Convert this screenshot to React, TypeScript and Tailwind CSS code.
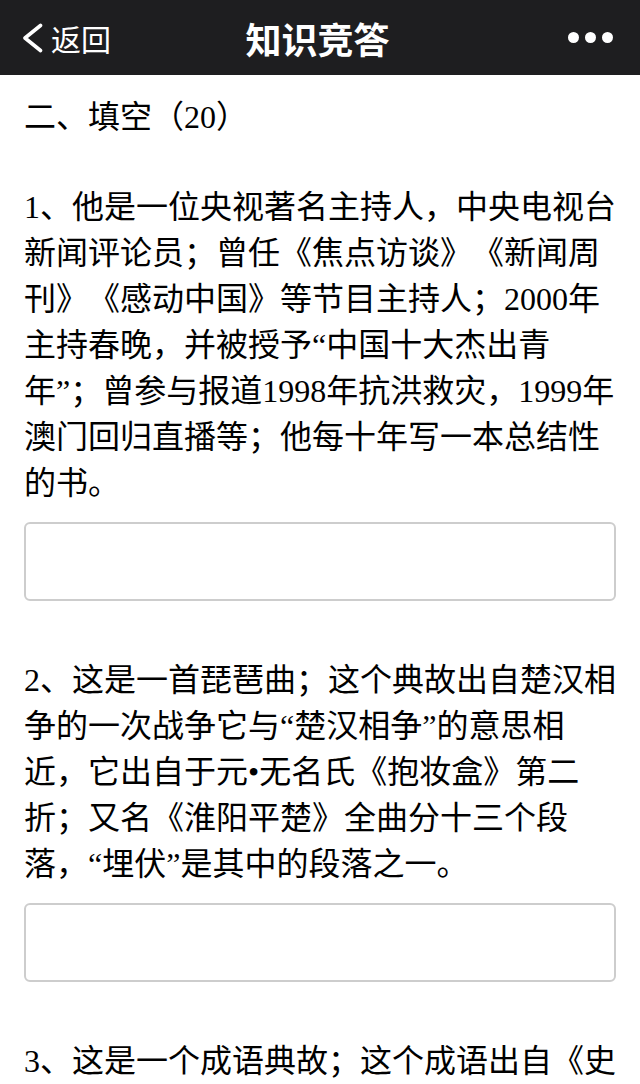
import React from 'react';

const bodyFont = {
    fontFamily: '"Liberation Serif", "Noto Sans CJK SC", serif',
};

const questions = [
    '1、他是一位央视著名主持人，中央电视台新闻评论员；曾任《焦点访谈》《新闻周刊》《感动中国》等节目主持人；2000年主持春晚，并被授予“中国十大杰出青年”；曾参与报道1998年抗洪救灾，1999年澳门回归直播等；他每十年写一本总结性的书。',
    '2、这是一首琵琶曲；这个典故出自楚汉相争的一次战争它与“楚汉相争”的意思相近，它出自于元•无名氏《抱妆盒》第二折；又名《淮阳平楚》全曲分十三个段落，“埋伏”是其中的段落之一。',
    '3、这是一个成语典故；这个成语出自《史记·廉颇蔺相如列传》，讲的是战国时期赵国的一段故事。',
];

const Header: React.FC = () => (
    <div
        className="flex h-[75px] items-center bg-[#1e1e20] px-[22px] text-white"
        style={{ fontFamily: '"Noto Sans CJK SC", sans-serif' }}
    >
        <div className="flex flex-1 items-center gap-[8px]">
            <svg width="21" height="30" viewBox="0 0 21 30" fill="none">
                <path d="M18.5 2.5 L3 15 L18.5 27.5" stroke="white" strokeWidth="3.6" strokeLinecap="round" strokeLinejoin="round" />
            </svg>
            <span className="text-[30px] leading-none">返回</span>
        </div>
        <div className="text-[36px] font-bold leading-none">知识竞答</div>
        <div className="flex flex-1 justify-end gap-[6px] pr-[5px]">
            <span className="block h-[11px] w-[11px] rounded-full bg-white" />
            <span className="block h-[11px] w-[11px] rounded-full bg-white" />
            <span className="block h-[11px] w-[11px] rounded-full bg-white" />
        </div>
    </div>
);

export default function App() {
    return (
        <div className="h-[1084px] overflow-hidden bg-white">
            <Header />
            <div
                className="px-[24px] pt-[19px] text-[32px] leading-[46px] text-black [text-spacing-trim:space-all]"
                style={bodyFont}
            >
                <p className="mr-[-4px]">二、填空（20）</p>
                {questions.map((q, i) => (
                    <div key={i} className={i === 0 ? 'mt-[44px]' : 'mt-[56px]'}>
                        <p className="mr-[-4px]">{q}</p>
                        <div className="mt-[16px] h-[79px] rounded-[6px] border-2 border-[#cdcdcd]" />
                    </div>
                ))}
            </div>
        </div>
    );
}
